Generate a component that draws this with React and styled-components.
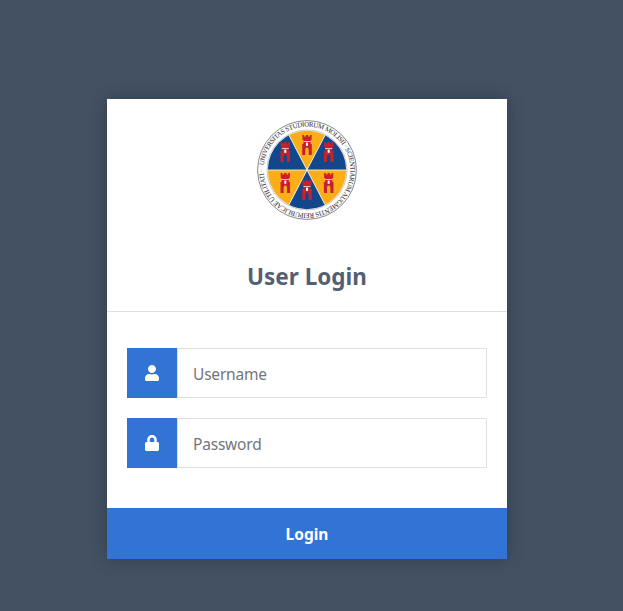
import React from "react";
import styled, { createGlobalStyle } from "styled-components";
import { FaUser, FaLock } from "react-icons/fa";

const GlobalStyle = createGlobalStyle`
  html, body {
    margin: 0;
    height: 100%;
  }
  body {
    background: #435163;
    font-family: "Noto Sans", "Open Sans", sans-serif;
  }
`;

const Page = styled.div`
  min-height: 611px;
  padding: 99px 9px 0 0;
  box-sizing: border-box;
  display: flex;
  justify-content: center;
  align-items: flex-start;
`;

const Card = styled.form`
  width: 400px;
  background: #fff;
  box-shadow: 0 0 16px rgba(0, 0, 0, 0.25);
  display: flex;
  flex-direction: column;
`;

const Header = styled.div`
  height: 191px;
  padding-top: 21px;
  border-bottom: 1px solid #e0e0e0;
  display: flex;
  flex-direction: column;
  align-items: center;
`;

const Title = styled.h1`
  margin: 41px 0 0;
  font-size: 22.5px;
  line-height: 32px;
  font-weight: 700;
  color: #555f73;
`;

const Fields = styled.div`
  padding: 36px 20px 40px;
  display: flex;
  flex-direction: column;
  gap: 20px;
`;

const Row = styled.div`
  display: flex;
  height: 50px;
`;

const IconBox = styled.span`
  width: 50px;
  flex: none;
  background: #3273d6;
  color: #fff;
  font-size: 16px;
  display: flex;
  align-items: center;
  justify-content: center;
`;

const Input = styled.input`
  flex: 1;
  min-width: 0;
  box-sizing: border-box;
  border: 1px solid #e0e0e0;
  outline: none;
  padding: 1px 15px 0;
  font: 400 15.5px "Noto Sans", "Open Sans", sans-serif;
  letter-spacing: -0.2px;
  color: #333;

  &::placeholder {
    color: #74757a;
    opacity: 1;
  }
`;

const Submit = styled.button`
  height: 51px;
  border: 0;
  background: #3273d6;
  color: #fff;
  font: 700 15.5px "Noto Sans", "Open Sans", sans-serif;
  cursor: pointer;
`;

const BLUE = "#12478c";
const GOLD = "#fbae17";
const RED = "#c8202f";

// tiny castle tower, centred on 0,0
const Tower = ({ x, y }) => (
  <g transform={`translate(${x} ${y})`}>
    <path
      fill={RED}
      d="M-4.8 10V-1H-3.6V-5H-4.6V-10H-2.9V-8.4H-1.2V-10H1.2V-8.4H2.9V-10H4.6V-5H3.6V-1H4.8V10H1.7V5A1.7 2.4 0 0 0 -1.7 5V10Z"
    />
    <rect x="-3.6" y="-4" width="7.2" height="0.7" fill="#fff" />
    <rect x="-1" y="-2.4" width="2" height="3.2" fill="#fff" />
  </g>
);

const Seal = () => (
  <svg width="100" height="100" viewBox="0 0 100 100">
    <defs>
      <path
        id="sealRing"
        transform="rotate(6 50 50)"
        d="M6.6 50a43.4 43.4 0 0 1 86.8 0a43.4 43.4 0 0 1 -86.8 0"
      />
      <clipPath id="sealDisc">
        <circle cx="50" cy="50" r="39.2" />
      </clipPath>
    </defs>
    <circle cx="50" cy="50" r="49.4" fill="#fff" stroke="#555" strokeWidth="0.7" />
    <circle cx="50" cy="50" r="40" fill="#fff" stroke="#777" strokeWidth="0.4" />
    <g clipPath="url(#sealDisc)">
      <path fill={GOLD} d="M50 50L24 0H76Z" />
      <path fill={BLUE} d="M50 50L76 0H100V50Z" />
      <path fill={GOLD} d="M50 50H100V100H76Z" />
      <path fill={BLUE} d="M50 50L76 100H24Z" />
      <path fill={GOLD} d="M50 50L24 100H0V50Z" />
      <path fill={BLUE} d="M50 50H0V0H24Z" />
      <path
        stroke="#fff"
        strokeWidth="0.8"
        d="M0 50H100M24 0L76 100M76 0L24 100"
      />
    </g>
    <Tower x={50} y={25} />
    <Tower x={71.7} y={32} />
    <Tower x={28.3} y={32} />
    <Tower x={28.3} y={63} />
    <Tower x={71.7} y={63} />
    <Tower x={50} y={70} />
    <text fontFamily="Liberation Serif, serif" fontSize="6.8" fill="#222">
      <textPath href="#sealRing" textLength="268" lengthAdjust="spacing">
        UNIVERSITAS STUDIORUM MOLISII · SCIENTIARUM AUGMENTIS REIPUBLICAE UTILITATI ·
      </textPath>
    </text>
  </svg>
);

export default function App() {
  return (
    <Page>
      <GlobalStyle />
      <Card onSubmit={(e) => e.preventDefault()}>
        <Header>
          <Seal />
          <Title>User Login</Title>
        </Header>
        <Fields>
          <Row>
            <IconBox>
              <FaUser />
            </IconBox>
            <Input type="text" placeholder="Username" />
          </Row>
          <Row>
            <IconBox>
              <FaLock />
            </IconBox>
            <Input type="password" placeholder="Password" />
          </Row>
        </Fields>
        <Submit type="submit">Login</Submit>
      </Card>
    </Page>
  );
}
